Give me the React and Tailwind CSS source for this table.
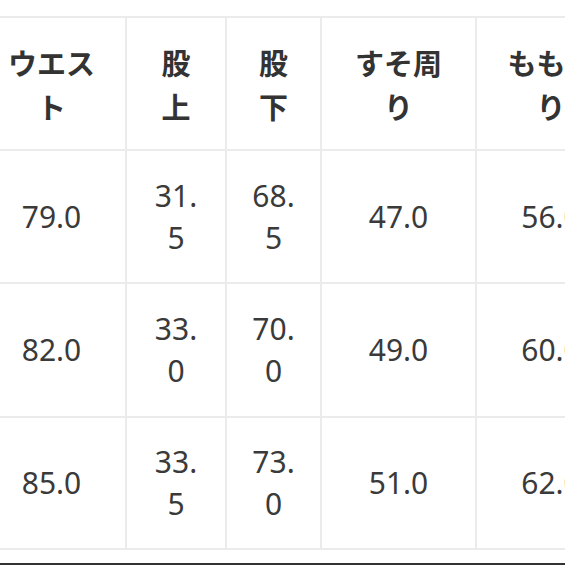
import React from "react";

const headers = [
  ["ウエス", "ト"],
  ["股", "上"],
  ["股", "下"],
  ["すそ周", "り"],
  ["もも周", "り"],
];

const rows = [
  [["79.0"], ["31.", "5"], ["68.", "5"], ["47.0"], ["56.0"]],
  [["82.0"], ["33.", "0"], ["70.", "0"], ["49.0"], ["60.0"]],
  [["85.0"], ["33.", "5"], ["73.", "0"], ["51.0"], ["62.0"]],
];

function Cell({ lines, head }) {
  return (
    <div className="bg-white flex flex-col items-center justify-center text-center">
      {lines.map((l, i) => (
        <div
          key={i}
          className={
            head
              ? "font-bold text-[29px] leading-[44px] text-[#333333] whitespace-nowrap"
              : "text-[30px] leading-[42px] text-[#3a3a3a] whitespace-nowrap"
          }
          style={{
            fontFamily: head
              ? '"Noto Sans CJK JP", "Noto Sans", sans-serif'
              : '"Noto Sans", "Noto Sans CJK JP", sans-serif',
          }}
        >
          {l}
        </div>
      ))}
    </div>
  );
}

export default function App() {
  return (
    <div className="w-[565px] h-[565px] bg-white overflow-hidden flex flex-col">
      <div className="mt-[16px] ml-[-24px] grid grid-cols-[147px_98px_93px_153px_148px] grid-rows-[131px_131px_132px_130px] gap-[2px] p-[2px] bg-[#ebebeb] w-max">
        {headers.map((h, i) => (
          <Cell key={"h" + i} lines={h} head />
        ))}
        {rows.map((r, ri) =>
          r.map((c, ci) => <Cell key={ri + "-" + ci} lines={c} />)
        )}
      </div>
      <div className="mt-[13px] h-[2px] bg-[#333333]" />
    </div>
  );
}
